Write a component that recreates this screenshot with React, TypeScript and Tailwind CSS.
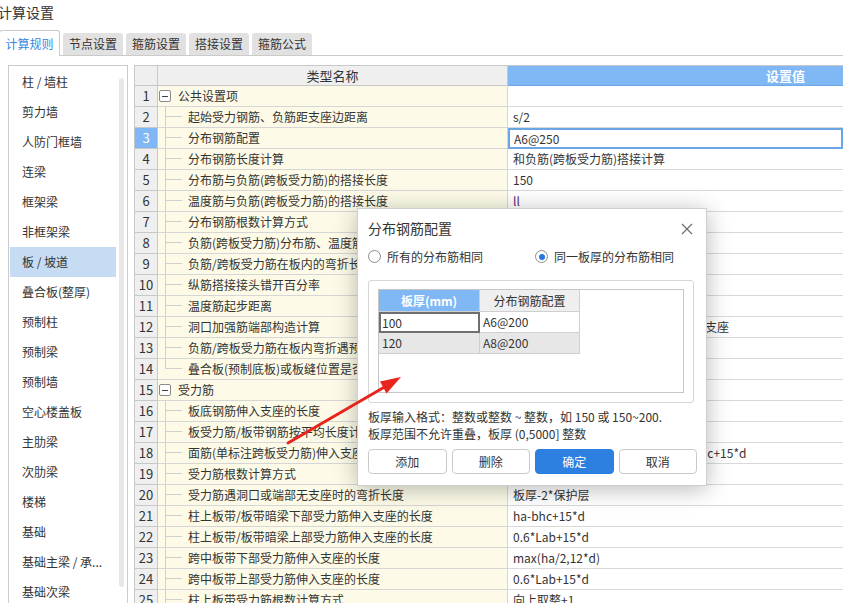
import React from "react";

type Row = {
  n: number;
  name: string;
  value?: string;
  group?: boolean;
  selected?: boolean;
  last?: boolean;
  valueClass?: string;
};

const rows: Row[] = [
  { n: 1, group: true, name: "公共设置项", value: "" },
  { n: 2, name: "起始受力钢筋、负筋距支座边距离", value: "s/2" },
  { n: 3, name: "分布钢筋配置", value: "A6@250", selected: true },
  { n: 4, name: "分布钢筋长度计算", value: "和负筋(跨板受力筋)搭接计算" },
  { n: 5, name: "分布筋与负筋(跨板受力筋)的搭接长度", value: "150" },
  { n: 6, name: "温度筋与负筋(跨板受力筋)的搭接长度", value: "ll", valueClass: "text-[#5b2a6e]" },
  { n: 7, name: "分布钢筋根数计算方式", value: "向下取整+1" },
  { n: 8, name: "负筋(跨板受力筋)分布筋、温度筋是否计入面积", value: "否" },
  { n: 9, name: "负筋/跨板受力筋在板内的弯折长度", value: "板厚-2*保护层" },
  { n: 10, name: "纵筋搭接接头错开百分率", value: "50%" },
  { n: 11, name: "温度筋起步距离", value: "s" },
  { n: 12, name: "洞口加强筋端部构造计算", value: "按设计要求，伸入支座内的长度锚入支座" },
  { n: 13, name: "负筋/跨板受力筋在板内弯折遇预制板时的弯折长度", value: "到预制板顶" },
  { n: 14, name: "叠合板(预制底板)或板缝位置是否计算负筋", value: "是", last: true },
  { n: 15, group: true, name: "受力筋", value: "" },
  { n: 16, name: "板底钢筋伸入支座的长度", value: "max(ha/2,5*d)" },
  { n: 17, name: "板受力筋/板带钢筋按平均长度计算", value: "否" },
  { n: 18, name: "面筋(单标注跨板受力筋)伸入支座的锚固长度", value: "\u00a0\u00a0能直锚就直锚，否则按公式：ha-bhc+15*d" },
  { n: 19, name: "受力筋根数计算方式", value: "向上取整+1" },
  { n: 20, name: "受力筋遇洞口或端部无支座时的弯折长度", value: "板厚-2*保护层" },
  { n: 21, name: "柱上板带/板带暗梁下部受力筋伸入支座的长度", value: "ha-bhc+15*d" },
  { n: 22, name: "柱上板带/板带暗梁上部受力筋伸入支座的长度", value: "0.6*Lab+15*d" },
  { n: 23, name: "跨中板带下部受力筋伸入支座的长度", value: "max(ha/2,12*d)" },
  { n: 24, name: "跨中板带上部受力筋伸入支座的长度", value: "0.6*Lab+15*d" },
  { n: 25, name: "柱上板带受力筋根数计算方式", value: "向上取整+1" },
];

const listItems = [
  "柱 / 墙柱",
  "剪力墙",
  "人防门框墙",
  "连梁",
  "框架梁",
  "非框架梁",
  "板 / 坡道",
  "叠合板(整厚)",
  "预制柱",
  "预制梁",
  "预制墙",
  "空心楼盖板",
  "主肋梁",
  "次肋梁",
  "楼梯",
  "基础",
  "基础主梁 / 承...",
  "基础次梁",
];

const tabs = ["节点设置", "箍筋设置", "搭接设置", "箍筋公式"];

function TreeCell({ row }: { row: Row }) {
  if (row.group) {
    return (
      <div className="flex h-full items-center">
        <div className="ml-[1px] flex h-[12px] w-[12px] items-center justify-center rounded-[2px] border border-[#8a8a8a] bg-white">
          <div className="h-px w-[6px] bg-[#444]" />
        </div>
        <span className="ml-[7px] leading-[20px]">{row.name}</span>
      </div>
    );
  }
  return (
    <div className="flex h-full items-stretch">
      <div className="ml-[7px] flex w-[17px] flex-col">
        <div className="h-[10px] border-b border-l border-[#cfcfcf]" />
        <div className={row.last ? "flex-1" : "flex-1 border-l border-[#cfcfcf]"} />
      </div>
      <span className="ml-[6px] whitespace-nowrap leading-[20px]">{row.name}</span>
    </div>
  );
}

function Radio({ checked }: { checked?: boolean }) {
  return (
    <div className="flex h-[13px] w-[13px] shrink-0 items-center justify-center rounded-full border border-[#8c8c8c] bg-white">
      {checked && <div className="h-[6px] w-[6px] rounded-full bg-[#2677dd]" />}
    </div>
  );
}

export default function App() {
  return (
    <div className="relative h-[603px] w-[843px] overflow-hidden bg-white text-[#333] [font-family:'Noto_Sans_CJK_SC','Noto_Sans',sans-serif]">
      {/* Title */}
      <div className="ml-[-2px] h-[30px] pt-[1px] text-[14px] leading-[22px]">计算设置</div>

      {/* Tabs */}
      <div className="flex h-[26px] items-end border-b border-[#cbcbcb] text-[12px]">
        <div className="-mb-px ml-[-1px] flex h-[26px] w-[61px] items-center justify-center rounded-t-[3px] border border-b-0 border-[#cbcbcb] bg-white text-[#3a86dc]">
          计算规则
        </div>
        {tabs.map((t) => (
          <div
            key={t}
            className="ml-[3px] flex h-[22px] w-[60px] items-center justify-center rounded-t-[3px] bg-[#e1e1e1] text-[#333]"
          >
            {t}
          </div>
        ))}
      </div>

      {/* Content */}
      <div className="mt-[9px] flex text-[12px]">
        {/* Left list */}
        <div className="ml-[8px] flex h-[560px] w-[120px] shrink-0 border border-[#cbcbcb] bg-white">
          <div className="ml-[1px] w-[106px] pt-px">
            {listItems.map((it, i) => (
              <div
                key={it}
                className={
                  "flex h-[30px] items-center whitespace-nowrap pl-[12px] " +
                  (i === 6 ? "bg-[#c5dcf2]" : "")
                }
              >
                {it}
              </div>
            ))}
          </div>
          <div className="ml-[3px] mt-[12px] h-[509px] w-[5px] rounded-full bg-[#e8e8e8]" />
        </div>

        {/* Main table */}
        <div className="ml-[6px] flex-1 overflow-hidden border-l border-t border-[#c8c8c8]">
          {/* Header */}
          <div className="flex h-[20px]">
            <div className="w-[23px] shrink-0 border-b border-r border-[#c8c8c8] bg-[#efefef]" />
            <div className="flex w-[350px] shrink-0 items-center justify-center border-b border-r border-[#c8c8c8] bg-[#efefef] text-[13px]">
              类型名称
            </div>
            <div className="flex flex-1 items-center border-b border-[#6ea7e6] bg-[#7fb8f5] pl-[258px] text-[13px] font-semibold text-white">
              设置值
            </div>
          </div>
          {rows.map((r) => (
            <div key={r.n} className="flex h-[21px]">
              <div
                className={
                  "flex w-[23px] shrink-0 items-center justify-center border-b border-r border-[#c8c8c8] text-[13px] " +
                  (r.selected ? "bg-[#7fb8f5] text-white" : "bg-[#efefef]")
                }
              >
                {r.n}
              </div>
              <div className="w-[350px] shrink-0 overflow-hidden border-b border-r border-[#d6d6d6] bg-[#fdfbe8] text-[12px]">
                <TreeCell row={r} />
              </div>
              <div
                className={
                  "flex flex-1 items-center whitespace-nowrap text-[12px] " +
                  (r.selected
                    ? "border-2 border-[#6aa5e6] pl-[4px]"
                    : "border-b border-[#d9d9d9] pl-[5px] ") +
                  (r.valueClass ?? "")
                }
              >
                {r.value}
              </div>
            </div>
          ))}
        </div>
      </div>

      {/* Dialog */}
      <div className="absolute left-[357px] top-[208px] h-[278px] w-[350px] border border-[#cfcfcf] bg-white text-[12px] shadow-[0_3px_22px_rgba(0,0,0,0.28)]">
        <div className="flex h-[39px] items-center justify-between pl-[10px] pr-[13px]">
          <span className="text-[14px]">分布钢筋配置</span>
          <svg width="12" height="12" viewBox="0 0 12 12">
            <path d="M1 1 L11 11 M11 1 L1 11" stroke="#6a6a6a" strokeWidth="1.1" fill="none" />
          </svg>
        </div>
        <div className="flex h-[17px] items-center pl-[10px]">
          <label className="flex w-[167px] items-center gap-[6px]">
            <Radio />
            <span>所有的分布筋相同</span>
          </label>
          <label className="flex items-center gap-[6px]">
            <Radio checked />
            <span>同一板厚的分布筋相同</span>
          </label>
        </div>
        <div className="ml-[10px] mr-[12px] mt-[15px] h-[123px] rounded-[3px] border border-[#d6d6d6] px-[9px] pt-[8px]">
          <div className="h-[104px] border border-[#c6c6c6] bg-white">
            <div className="flex h-[22px]">
              <div className="flex w-[101px] items-center justify-center border-b border-r border-[#cfcfcf] bg-[#80b8f5] font-bold text-white">
                板厚(mm)
              </div>
              <div className="flex w-[100px] items-center justify-center border-b border-r border-[#cfcfcf] bg-[#efefef]">
                分布钢筋配置
              </div>
            </div>
            <div className="flex h-[21px]">
              <div className="flex w-[101px] items-center pl-[3px] shadow-[inset_0_0_0_2px_#6f6f6f]">100</div>
              <div className="flex w-[100px] items-center border-b border-r border-[#cfcfcf] pl-[3px]">A6@200</div>
            </div>
            <div className="flex h-[21px]">
              <div className="flex w-[101px] items-center border-b border-r border-[#cfcfcf] bg-[#e7e7e7] pl-[3px]">120</div>
              <div className="flex w-[100px] items-center border-b border-r border-[#cfcfcf] bg-[#e7e7e7] pl-[3px]">A8@200</div>
            </div>
          </div>
        </div>
        <div className="mt-[5px] pl-[10px] leading-[17px]">
          <div>板厚输入格式：整数或整数 ~ 整数，如 150 或 150~200.</div>
          <div>板厚范围不允许重叠，板厚 (0,5000] 整数</div>
        </div>
        <div className="mt-[7px] grid grid-cols-4 gap-[5px] pl-[10px] pr-[9px]">
          <button className="flex h-[25px] items-center justify-center rounded-[4px] border border-[#cacaca] bg-white">添加</button>
          <button className="flex h-[25px] items-center justify-center rounded-[4px] border border-[#cacaca] bg-white">删除</button>
          <button className="flex h-[25px] items-center justify-center rounded-[4px] border border-[#2b7fe0] bg-[#2e80e0] text-white">确定</button>
          <button className="flex h-[25px] items-center justify-center rounded-[4px] border border-[#cacaca] bg-white">取消</button>
        </div>
      </div>

      {/* Red arrow annotation */}
      <svg className="pointer-events-none absolute left-0 top-0" width="843" height="603" viewBox="0 0 843 603">
        <line x1="288" y1="443" x2="388" y2="385" stroke="#e8241c" strokeWidth="3" strokeLinecap="round" />
        <polygon points="401,377 386.5,393.5 380,381.5" fill="#e8241c" />
      </svg>
    </div>
  );
}
